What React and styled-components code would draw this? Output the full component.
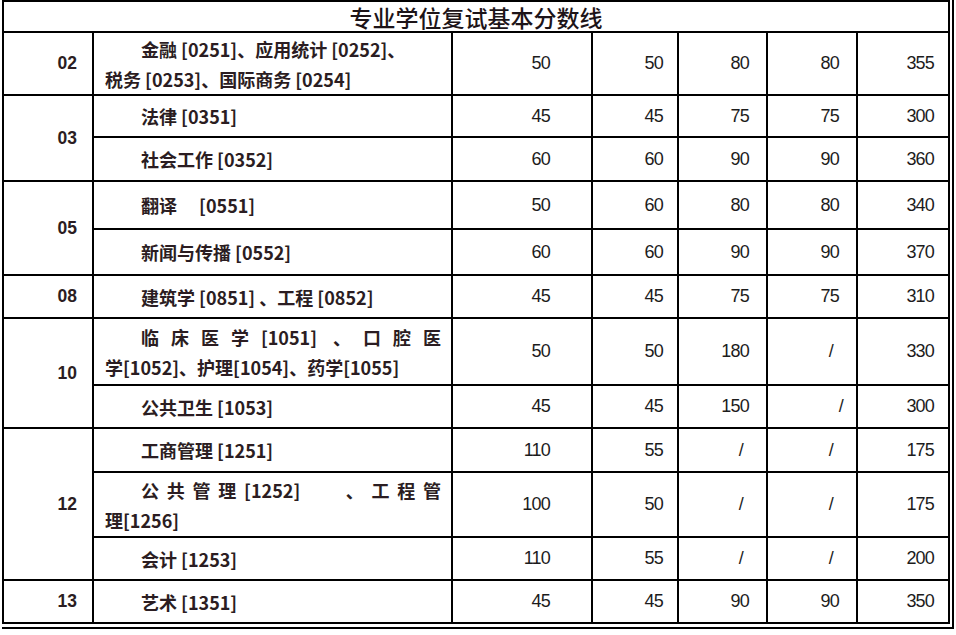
import React from "react";
import styled, { createGlobalStyle } from "styled-components";

const GlobalStyle = createGlobalStyle`
  html, body {
    margin: 0;
    padding: 0;
    background: #ffffff;
  }
  body {
    font-family: "Liberation Sans", "Noto Sans CJK SC", sans-serif;
    color: #1c1c1c;
  }
`;

const COLS = [90, 359, 140, 86, 89, 90, 92];
const PADS = [41, 14, 17, 17, 14];
const SLASH_PADS = [41, 14, 23, 23, 14];

const groups = [
  {
    code: "02",
    rows: [
      {
        h: 63,
        lines: ["金融 [0251]、应用统计 [0252]、", "税务 [0253]、国际商务 [0254]"],
        scores: ["50", "50", "80", "80", "355"],
      },
    ],
  },
  {
    code: "03",
    rows: [
      { h: 42, lines: ["法律 [0351]"], scores: ["45", "45", "75", "75", "300"] },
      { h: 44, lines: ["社会工作 [0352]"], scores: ["60", "60", "90", "90", "360"] },
    ],
  },
  {
    code: "05",
    rows: [
      { h: 48, lines: ["翻译　 [0551]"], scores: ["50", "60", "80", "80", "340"] },
      { h: 46, lines: ["新闻与传播 [0552]"], scores: ["60", "60", "90", "90", "370"] },
    ],
  },
  {
    code: "08",
    rows: [
      {
        h: 43,
        lines: ["建筑学 [0851] 、工程 [0852]"],
        scores: ["45", "45", "75", "75", "310"],
      },
    ],
  },
  {
    code: "10",
    rows: [
      {
        h: 67,
        lines: ["临床医学[1051] 、口腔医", "学[1052]、护理[1054]、药学[1055]"],
        justify: true,
        scores: ["50", "50", "180", "/", "330"],
      },
      {
        h: 43,
        lines: ["公共卫生 [1053]"],
        scores: ["45", "45", "150", { v: "/", pad: 13 }, "300"],
      },
    ],
  },
  {
    code: "12",
    rows: [
      { h: 44, lines: ["工商管理 [1251]"], scores: ["110", "55", "/", "/", "175"] },
      {
        h: 65,
        lines: ["公共管理[1252]　 、工程管", "理[1256]"],
        justify: true,
        scores: ["100", "50", "/", "/", "175"],
      },
      { h: 43, lines: ["会计 [1253]"], scores: ["110", "55", "/", "/", "200"] },
    ],
  },
  {
    code: "13",
    rows: [
      { h: 43, lines: ["艺术 [1351]"], scores: ["45", "45", "90", "90", "350"] },
    ],
  },
];

const Frame = styled.div`
  display: inline-block;
  margin-left: 2px;
  padding: 0 2px 3px 0;
  border-right: 2px solid #000;
  border-bottom: 2px solid #000;
`;

const Table = styled.table`
  table-layout: fixed;
  border-collapse: separate;
  border-spacing: 0;
  width: 948px;
  border-left: 2px solid #000;
  border-top: 2px solid #000;
`;

const Col = styled.col`
  width: ${(p) => p.$w}px;
`;

const Row = styled.tr`
  height: ${(p) => p.$h}px;
`;

const Cell = styled.td`
  padding: 0;
  border-right: 2px solid #000;
  border-bottom: 2px solid #000;
  vertical-align: middle;
  box-sizing: border-box;
`;

const TitleCell = styled(Cell)`
  text-align: center;
  font-family: "Noto Sans CJK SC", sans-serif;
  font-size: 23px;
  font-weight: 500;
  line-height: 28px;
  color: #1d1418;
`;

const CodeCell = styled(Cell)`
  text-align: right;
  padding-right: 15px;
  font-size: 17.5px;
  font-weight: 700;
  color: #2b1d22;
`;

const NameCell = styled(Cell)`
  padding: 0 10px 0 11px;
  font-family: "Noto Sans CJK SC", sans-serif;
  font-size: 18px;
  font-weight: 700;
  line-height: 30px;
  color: #2b1d22;
`;

const Line = styled.div`
  text-indent: ${(p) => (p.$first ? "36px" : "0")};
  text-align: ${(p) => (p.$justify ? "justify" : "left")};
  text-align-last: ${(p) => (p.$justify ? "justify" : "auto")};
  white-space: ${(p) => (p.$justify ? "normal" : "nowrap")};
`;

const ScoreCell = styled(Cell)`
  text-align: right;
  padding-right: ${(p) => p.$pad}px;
  font-size: 18px;
  letter-spacing: -0.8px;
  color: #1c1c1c;
`;

const Score = ({ value, index }) => {
  const v = typeof value === "object" ? value.v : value;
  let pad = v === "/" ? SLASH_PADS[index] : PADS[index];
  if (typeof value === "object" && value.pad) pad = value.pad;
  return <ScoreCell $pad={pad}>{v}</ScoreCell>;
};

export default function App() {
  return (
    <>
      <GlobalStyle />
      <Frame>
        <Table>
          <colgroup>
            {COLS.map((w, i) => (
              <Col key={i} $w={w} />
            ))}
          </colgroup>
          <tbody>
            <Row $h={31}>
              <TitleCell colSpan={7}>专业学位复试基本分数线</TitleCell>
            </Row>
            {groups.map((g) =>
              g.rows.map((r, ri) => (
                <Row key={g.code + ri} $h={r.h}>
                  {ri === 0 && <CodeCell rowSpan={g.rows.length}>{g.code}</CodeCell>}
                  <NameCell>
                    {r.lines.map((l, li) => (
                      <Line
                        key={li}
                        $first={li === 0}
                        $justify={r.justify && li === 0}
                      >
                        {l}
                      </Line>
                    ))}
                  </NameCell>
                  {r.scores.map((s, si) => (
                    <Score key={si} value={s} index={si} />
                  ))}
                </Row>
              ))
            )}
          </tbody>
        </Table>
      </Frame>
    </>
  );
}
